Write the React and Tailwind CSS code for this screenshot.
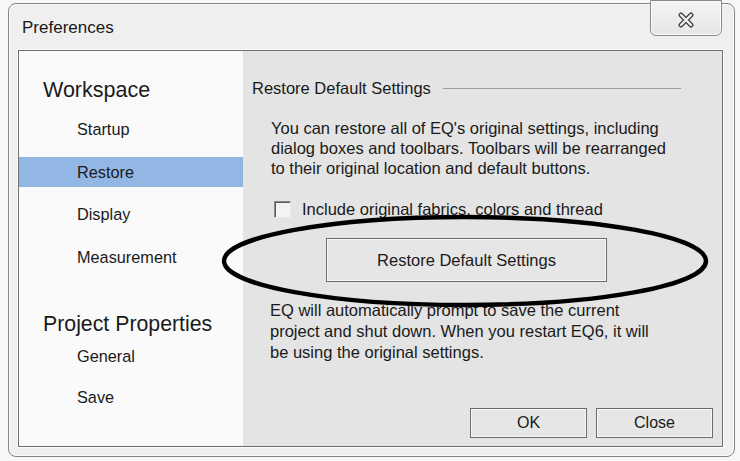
import React from 'react';

const navItem = 'flex h-[30px] items-center pl-[58px] text-[16.3px]';
const dlgButton = 'border border-[#6c6c6c] bg-[#e6e6e6] shadow-[inset_0_0_0_1px_#f7f7f7]';

export default function App() {
    return (
        <div className="relative h-[461px] w-[740px] overflow-hidden bg-[#f7f7f7] pl-[8px] pt-[3px] font-['Liberation_Sans',Arial,sans-serif] text-[#1a1a1a]">
            <div className="flex h-[454px] w-[727px] flex-col rounded-[8px] border border-[#858585] bg-[#efefef] shadow-[inset_0_0_0_1px_#fafafa]">
                {/* title bar */}
                <div className="flex h-[46px] items-start justify-between">
                    <span className="pl-[13px] pt-[14px] text-[17px] leading-[20px]">Preferences</span>
                    <button
                        type="button"
                        aria-label="Close"
                        className="mr-[12px] -mt-[4px] flex h-[36px] w-[72px] items-center justify-center rounded-b-[6px] border border-[#8a8a8a] bg-gradient-to-b from-[#f4f4f4] to-[#e6e6e6] shadow-[inset_0_0_0_1px_#fcfcfc]"
                    >
                        <svg width="18" height="16" viewBox="0 0 18 16" className="mt-[4px]">
                            <path d="M4 3 L14 13 M14 3 L4 13" stroke="#4a4a4a" strokeWidth="5" strokeLinecap="round" />
                            <path d="M4 3 L14 13 M14 3 L4 13" stroke="#f2f2f2" strokeWidth="2.2" strokeLinecap="round" />
                        </svg>
                    </button>
                </div>

                {/* inner panel */}
                <div className="ml-[9px] mr-[11px] flex h-[397px] border border-[#6f6f6f] shadow-[0_0_0_1px_#fbfbfb]">
                    {/* nav */}
                    <div className="w-[224px] bg-[#fafafa] pt-[24px]">
                        <div className="flex h-[30px] items-center pl-[24px] text-[21.5px]">Workspace</div>
                        <div className={`${navItem} mt-[9px]`}>Startup</div>
                        <div className={`${navItem} mt-[13px] bg-[#93b7e4]`}>Restore</div>
                        <div className={`${navItem} mt-[12px]`}>Display</div>
                        <div className={`${navItem} mt-[13px]`}>Measurement</div>
                        <div className="mt-[38px] flex h-[30px] items-center pl-[24px] text-[21.3px]">Project Properties</div>
                        <div className={`${navItem} mt-px`}>General</div>
                        <div className={`${navItem} mt-[11px]`}>Save</div>
                    </div>

                    {/* content */}
                    <div className="flex flex-1 flex-col bg-[#e4e4e4]">
                        <div className="mt-[27px] flex h-[20px] items-center gap-[12px] pl-[9px] pr-[41px] text-[16.5px]">
                            <span className="whitespace-nowrap">Restore Default Settings</span>
                            <div className="h-px flex-1 bg-[#9c9c9c]" />
                        </div>

                        <p className="mt-[20px] whitespace-nowrap pl-[28px] text-[16.5px] leading-[20px]">
                            You can restore all of EQ's original settings, including
                            <br />
                            dialog boxes and toolbars. Toolbars will be rearranged
                            <br />
                            to their original location and default buttons.
                        </p>

                        <label className="mt-[21px] flex h-[20px] items-center gap-[11px] pl-[31px] text-[16.5px]">
                            <span className="h-[17px] w-[17px] border border-[#8a8a8a] border-r-[#e9e9e9] border-b-[#e9e9e9] bg-[#f3f3f3] shadow-[inset_1px_1px_0_#5a5a5a]" />
                            <span className="whitespace-nowrap">Include original fabrics, colors and thread</span>
                        </label>

                        <button type="button" className={`${dlgButton} ml-[83px] mt-[19px] h-[44px] w-[281px] text-[16.5px]`}>
                            Restore Default Settings
                        </button>

                        <p className="mt-[18px] whitespace-nowrap pl-[27px] text-[16.5px] leading-[21px]">
                            EQ will automatically prompt to save the current
                            <br />
                            project and shut down. When you restart EQ6, it will
                            <br />
                            be using the original settings.
                        </p>

                        <div className="mt-auto flex justify-end gap-[9px] pb-[8px] pr-[9px]">
                            <button type="button" className={`${dlgButton} h-[30px] w-[117px] text-[16px]`}>
                                OK
                            </button>
                            <button type="button" className={`${dlgButton} h-[30px] w-[117px] text-[16px]`}>
                                Close
                            </button>
                        </div>
                    </div>
                </div>
            </div>

            {/* hand-drawn highlight ellipse */}
            <svg className="pointer-events-none absolute left-[220px] top-[212px]" width="490" height="98" viewBox="0 0 490 98">
                <ellipse cx="245" cy="49" rx="241" ry="44" fill="none" stroke="#000" strokeWidth="4.5" />
            </svg>
        </div>
    );
}
